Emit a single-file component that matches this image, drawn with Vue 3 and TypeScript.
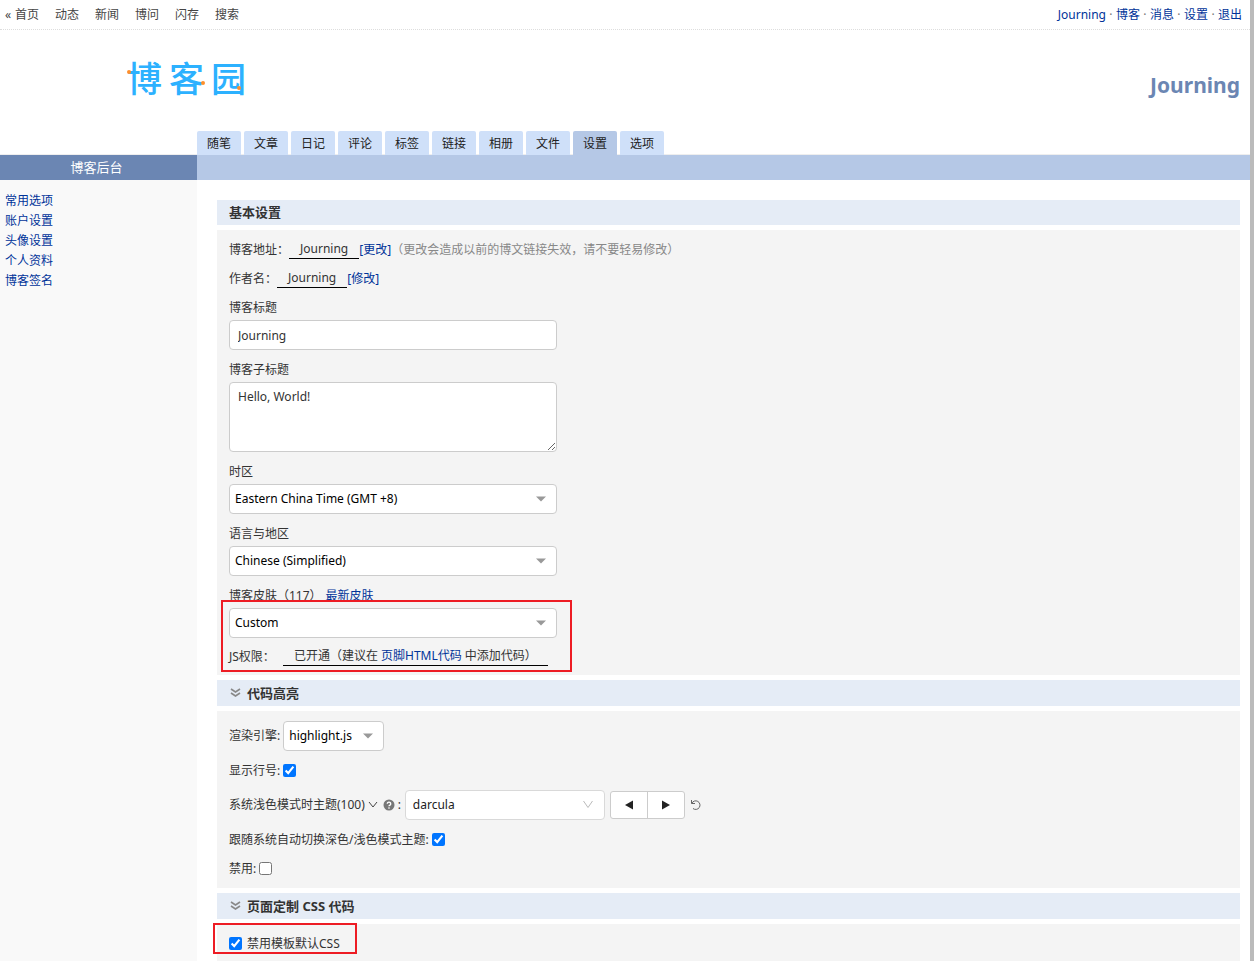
<script setup lang="ts">
import { ref } from 'vue'

const siteLinks: string[] = ['首页', '动态', '新闻', '博问', '闪存', '搜索']
const userLinks: string[] = ['Journing', '博客', '消息', '设置', '退出']
const tabs: string[] = ['随笔', '文章', '日记', '评论', '标签', '链接', '相册', '文件', '设置', '选项']
const activeTab = ref('设置')
const sideLinks: string[] = ['常用选项', '账户设置', '头像设置', '个人资料', '博客签名']

const blogTitle = ref('Journing')
const subTitle = ref('Hello, World!')
const timezone = ref('Eastern China Time (GMT +8)')
const locale = ref('Chinese (Simplified)')
const skin = ref('Custom')
const engine = ref('highlight.js')
const theme = ref('darcula')
const showLines = ref(true)
const followSystem = ref(true)
const disabled = ref(false)
const disableCss = ref(true)
</script>

<template>
  <div class="page">
    <div class="topbar">
      <nav class="site-nav">
        <span class="back">«</span>
        <a v-for="l in siteLinks" :key="l" href="#">{{ l }}</a>
      </nav>
      <nav class="user-nav">
        <template v-for="(l, i) in userLinks" :key="l">
          <span v-if="i > 0" class="dot">·</span>
          <a href="#">{{ l }}</a>
        </template>
      </nav>
    </div>

    <header class="header">
      <a href="#" class="logo">
        <span>博</span><span>客</span><span>园</span>
        <svg class="logo-dots" viewBox="0 0 120 36" aria-hidden="true">
          <circle cx="2" cy="13" r="2" />
          <circle cx="76" cy="24" r="2" />
          <circle cx="112" cy="29" r="2" />
        </svg>
      </a>
      <h1 class="blog-name">Journing</h1>
    </header>

    <nav class="tabs">
      <a v-for="t in tabs" :key="t" href="#" :class="{ active: t === activeTab }" @click.prevent="activeTab = t">{{ t }}</a>
    </nav>

    <div class="band">
      <div class="band-title">博客后台</div>
    </div>

    <div class="body">
      <aside class="side">
        <a v-for="l in sideLinks" :key="l" href="#">{{ l }}</a>
      </aside>

      <main class="main">
        <h2 class="section-title">基本设置</h2>
        <section class="panel basic">
          <div class="line">
            <span>博客地址：</span><span class="filled">Journing</span><a href="#">[更改]</a><span class="hint">（更改会造成以前的博文链接失效，请不要轻易修改）</span>
          </div>
          <div class="line">
            <span>作者名：</span><span class="filled">Journing</span><a href="#">[修改]</a>
          </div>
          <div class="field first">
            <label for="blog-title">博客标题</label>
            <input id="blog-title" v-model="blogTitle" type="text" class="box" />
          </div>
          <div class="field">
            <label for="sub-title">博客子标题</label>
            <textarea id="sub-title" v-model="subTitle" class="box area"></textarea>
          </div>
          <div class="field">
            <label for="timezone">时区</label>
            <div class="pick">
              <select id="timezone" v-model="timezone"><option>Eastern China Time (GMT +8)</option></select>
              <svg class="arrow" viewBox="0 0 10 6"><path d="M0 0.5h10l-5 5z" /></svg>
            </div>
          </div>
          <div class="field">
            <label for="locale">语言与地区</label>
            <div class="pick">
              <select id="locale" v-model="locale"><option>Chinese (Simplified)</option></select>
              <svg class="arrow" viewBox="0 0 10 6"><path d="M0 0.5h10l-5 5z" /></svg>
            </div>
          </div>
          <div class="field">
            <div class="label-row"><label for="skin">博客皮肤（117）</label><a href="#">最新皮肤</a></div>
            <div class="marked">
              <div class="pick">
                <select id="skin" v-model="skin"><option>Custom</option></select>
                <svg class="arrow" viewBox="0 0 10 6"><path d="M0 0.5h10l-5 5z" /></svg>
              </div>
              <div class="line js">
                <span>JS权限：</span>
                <span class="filled">已开通（建议在 <a href="#">页脚HTML代码</a> 中添加代码）</span>
              </div>
              <div class="mark skin-mark"></div>
            </div>
          </div>
        </section>

        <h2 class="section-title fold">
          <svg class="fold-icon" viewBox="0 0 11 10"><path d="M1 1l4.500 3L10 1M1 5l4.500 3L10 5" /></svg>代码高亮
        </h2>
        <section class="panel stack">
          <div class="row tall">
            <label for="engine">渲染引擎:</label>
            <div class="pick small">
              <select id="engine" v-model="engine"><option>highlight.js</option></select>
              <svg class="arrow" viewBox="0 0 10 6"><path d="M0 0.5h10l-5 5z" /></svg>
            </div>
          </div>
          <div class="row">
            <label for="lines">显示行号:</label>
            <input id="lines" v-model="showLines" type="checkbox" />
          </div>
          <div class="row tall">
            <label for="theme">系统浅色模式时主题(100)</label>
            <svg class="chev" viewBox="0 0 10 8"><path d="M1 1l4 5 4-5" /></svg>
            <svg class="help" viewBox="0 0 12 12">
              <circle cx="6" cy="6" r="5.500" />
              <path d="M4.300 4.700a1.700 1.600 0 1 1 2.600 1.400q-.9.500-.9 1.200" />
              <rect x="5.300" y="8.300" width="1.400" height="1.400" />
            </svg>
            <span class="colon">:</span>
            <div class="pick theme">
              <select id="theme" v-model="theme"><option>darcula</option></select>
              <svg class="thin-arrow" viewBox="0 0 12 9"><path d="M1.500 1L6 7.500 10.500 1" /></svg>
            </div>
            <div class="pager">
              <button type="button" aria-label="上一个"><svg viewBox="0 0 8 10"><path d="M8 0.500v9L0 5z" /></svg></button>
              <button type="button" aria-label="下一个"><svg viewBox="0 0 8 10"><path d="M0 0.500v9L8 5z" /></svg></button>
            </div>
            <button type="button" class="reset" aria-label="重置">
              <svg viewBox="0 0 12 12"><path d="M1.500 1v3.500H5M1.800 4.300A4.300 4.300 0 1 1 3 9.500" /></svg>
            </button>
          </div>
          <div class="row">
            <label for="follow">跟随系统自动切换深色/浅色模式主题:</label>
            <input id="follow" v-model="followSystem" type="checkbox" />
          </div>
          <div class="row">
            <label for="disabled">禁用:</label>
            <input id="disabled" v-model="disabled" type="checkbox" />
          </div>
        </section>

        <h2 class="section-title fold">
          <svg class="fold-icon" viewBox="0 0 11 10"><path d="M1 1l4.500 3L10 1M1 5l4.500 3L10 5" /></svg>页面定制 CSS 代码
        </h2>
        <section class="panel stack last">
          <div class="row css-row">
            <input id="css" v-model="disableCss" type="checkbox" />
            <label for="css">禁用模板默认CSS</label>
          </div>
          <div class="mark css-mark"></div>
        </section>
      </main>
    </div>
  </div>
</template>

<style>
body {
  margin: 0;
  background: #fff;
}
</style>

<style scoped>
.page {
  box-sizing: border-box;
  min-height: 100vh;
  display: flex;
  flex-direction: column;
  border-right: 4px solid #bbb;
  font: 12px/20px "Noto Sans", "Noto Sans CJK SC", sans-serif;
  color: #333;
}
a {
  color: #039;
  text-decoration: none;
}
.topbar {
  display: flex;
  justify-content: space-between;
  align-items: center;
  height: 29px;
  padding: 0 8px 0 5px;
  border-bottom: 1px dotted #ddd;
}
.site-nav {
  display: flex;
  gap: 16px;
}
.site-nav a {
  color: #444;
}
.back {
  width: 10px;
  margin-right: -16px;
  color: #444;
}
.user-nav {
  display: flex;
  align-items: center;
}
.dot {
  width: 10px;
  text-align: center;
  color: #777;
}
.header {
  display: flex;
  justify-content: space-between;
  align-items: flex-start;
  height: 101px;
  padding: 0 10px 0 127px;
}
.logo {
  position: relative;
  display: flex;
  gap: 7px;
  margin-top: 29px;
  font: 700 35px/36px "Noto Sans CJK SC", sans-serif;
  font-weight: 500;
  color: #2cb1ff;
}
.logo-dots {
  position: absolute;
  left: 0;
  top: 0;
  width: 120px;
  height: 36px;
  fill: #ff8f2b;
}
.blog-name {
  margin: 40px 0 0;
  font-size: 21px;
  line-height: 30px;
  font-weight: 700;
  color: #6b86b3;
}
.tabs {
  display: flex;
  gap: 3px;
  padding-left: 197px;
  border-bottom: 1px solid #eee;
}
.tabs a {
  width: 44px;
  padding-top: 2px;
  line-height: 22px;
  margin-bottom: -1px;
  text-align: center;
  color: #222;
  background: #cfe0f9;
  border-radius: 2px 2px 0 0;
}
.tabs a.active {
  background: #b5c8e6;
}
.band {
  background: #b5c8e6;
}
.band-title {
  box-sizing: border-box;
  width: 197px;
  padding-right: 4px;
  line-height: 25px;
  font-size: 13px;
  text-align: center;
  color: #fff;
  background: #6b86b3;
}
.body {
  flex: 1;
  display: flex;
}
.side {
  box-sizing: border-box;
  flex: none;
  width: 197px;
  padding: 11px 5px;
  background: #f9f9f9;
}
.side a {
  display: block;
}
.main {
  flex: 1;
  display: flex;
  flex-direction: column;
  gap: 5px;
  padding: 20px 10px 0 20px;
}
.section-title {
  display: flex;
  align-items: center;
  margin: 0;
  padding-left: 12px;
  font-size: 13px;
  line-height: 25px;
  font-weight: 700;
  background: #e5ecf6;
}
.fold {
  line-height: 26px;
}
.fold-icon {
  width: 11px;
  height: 10px;
  margin: 0 6px 0 1px;
  fill: none;
  stroke: #888;
  stroke-width: 1.6;
}
.panel {
  position: relative;
  background: #f4f4f4;
}
.basic {
  padding: 5px 12px 4px;
}
.line {
  display: flex;
  align-items: center;
  height: 29px;
}
.filled {
  padding: 0 11px;
  line-height: 18px;
  border-bottom: 1px solid #000;
}
.hint {
  color: #888;
}
.field {
  display: flex;
  flex-direction: column;
  align-items: flex-start;
  padding-top: 7px;
}
.field.first {
  padding-top: 2px;
}
.field label {
  line-height: 25px;
}
.label-row {
  display: flex;
  align-items: center;
  gap: 4px;
}
.box,
.pick {
  box-sizing: border-box;
  width: 328px;
  border: 1px solid #ccc;
  border-radius: 4px;
  background: #fff;
}
.box {
  height: 30px;
  margin: 0;
  padding: 0 8px;
  font: 12px/20px "Noto Sans", "Noto Sans CJK SC", sans-serif;
  color: #333;
}
.area {
  height: 70px;
  padding: 4px 8px;
  resize: both;
}
.pick {
  position: relative;
  height: 30px;
}
.pick select {
  appearance: none;
  width: 100%;
  height: 28px;
  padding: 0 5px;
  border: 0;
  background: transparent;
  font: 12px/20px "Noto Sans", "Noto Sans CJK SC", sans-serif;
  color: #000;
}
.arrow {
  position: absolute;
  right: 10px;
  top: 11px;
  width: 10px;
  height: 6px;
  fill: #999;
  pointer-events: none;
}
.marked {
  position: relative;
}
.js {
  gap: 8px;
  padding-top: 4px;
}
.mark {
  position: absolute;
  box-sizing: border-box;
  border: 2px solid #ed1c24;
  pointer-events: none;
}
.skin-mark {
  left: -8px;
  top: -8px;
  width: 351px;
  height: 72px;
}
.css-mark {
  left: -4px;
  top: -1px;
  width: 144px;
  height: 31px;
}
.stack {
  display: flex;
  flex-direction: column;
  gap: 10px;
  padding: 10px 12px;
}
.last {
  flex: 1;
}
.row {
  display: flex;
  align-items: center;
  gap: 3px;
  height: 19px;
}
.row.tall {
  height: 30px;
}
.row input {
  width: 13px;
  height: 13px;
  margin: 0;
}
.css-row {
  gap: 5px;
}
.small {
  width: 101px;
}
.theme {
  width: 200px;
  border-color: #d9d9d9;
}
.theme select {
  padding: 0 7px;
  color: #222;
}
.thin-arrow {
  position: absolute;
  right: 10px;
  top: 9px;
  width: 12px;
  height: 9px;
  fill: none;
  stroke: #bbb;
  pointer-events: none;
}
.chev {
  width: 10px;
  height: 8px;
  fill: none;
  stroke: #444;
}
.help {
  width: 12px;
  height: 12px;
  margin-left: 2px;
}
.help circle {
  fill: #777;
}
.help rect {
  fill: #fff;
}
.help path {
  fill: none;
  stroke: #fff;
  stroke-width: 1.4;
}
.colon {
  width: 4px;
}
.pager {
  display: flex;
  height: 28px;
  margin-left: 2px;
  box-sizing: border-box;
  border: 1px solid #ccc;
  border-radius: 3px;
  background: #fff;
}
.pager button {
  box-sizing: border-box;
  width: 36px;
  padding: 0;
  border: 0;
  background: transparent;
}
.pager button + button {
  width: 37px;
  border-left: 1px solid #ccc;
}
.pager svg {
  width: 8px;
  height: 10px;
  fill: #222;
}
.reset {
  display: flex;
  margin-left: 2px;
  padding: 0;
  border: 0;
  background: transparent;
}
.reset svg {
  width: 12px;
  height: 12px;
  fill: none;
  stroke: #666;
}
</style>
